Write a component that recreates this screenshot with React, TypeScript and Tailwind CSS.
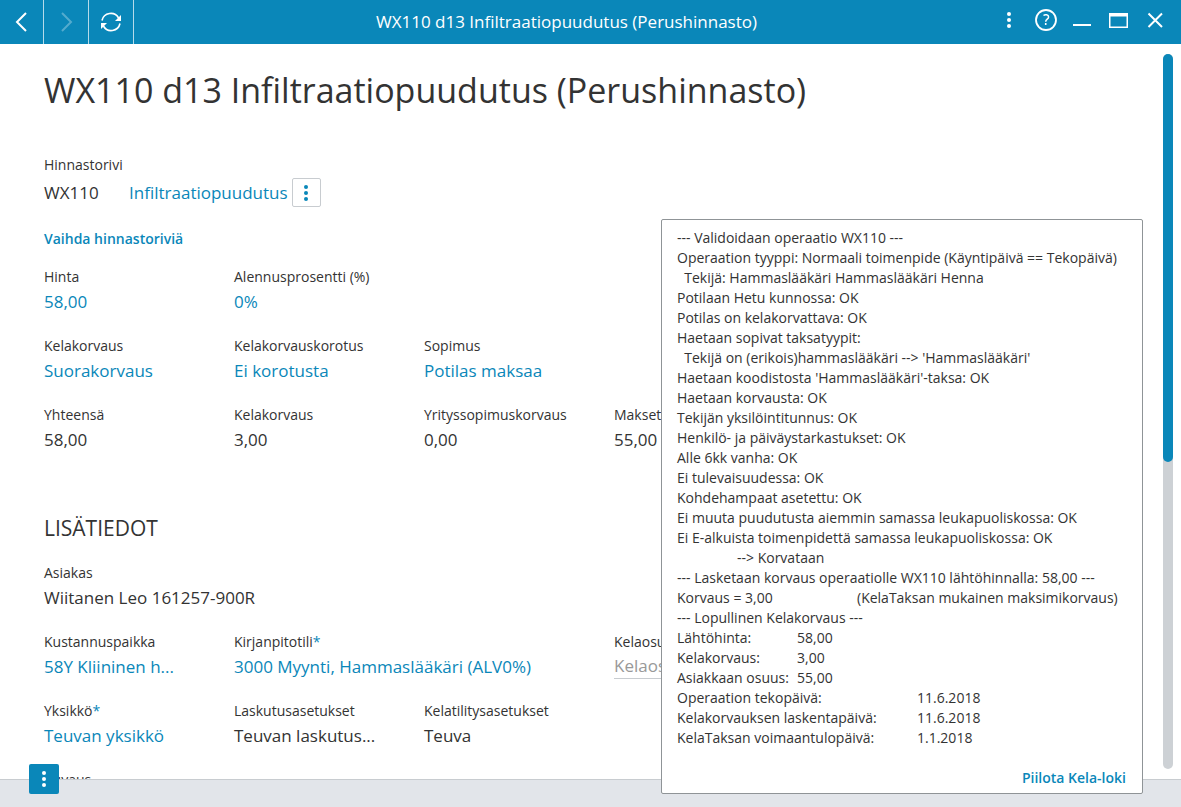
import { useState } from "react";
import type { ReactNode } from "react";

const LOG_TEXT = [
  "--- Validoidaan operaatio WX110 ---",
  "Operaation tyyppi: Normaali toimenpide (Käyntipäivä == Tekopäivä)",
  "  Tekijä: Hammaslääkäri Hammaslääkäri Henna",
  "Potilaan Hetu kunnossa: OK",
  "Potilas on kelakorvattava: OK",
  "Haetaan sopivat taksatyypit:",
  "  Tekijä on (erikois)hammaslääkäri --> 'Hammaslääkäri'",
  "Haetaan koodistosta 'Hammaslääkäri'-taksa: OK",
  "Haetaan korvausta: OK",
  "Tekijän yksilöintitunnus: OK",
  "Henkilö- ja päiväystarkastukset: OK",
  "Alle 6kk vanha: OK",
  "Ei tulevaisuudessa: OK",
  "Kohdehampaat asetettu: OK",
  "Ei muuta puudutusta aiemmin samassa leukapuoliskossa: OK",
  "Ei E-alkuista toimenpidettä samassa leukapuoliskossa: OK",
  "\t--> Korvataan",
  "--- Lasketaan korvaus operaatiolle WX110 lähtöhinnalla: 58,00 ---",
  "Korvaus = 3,00\t\t(KelaTaksan mukainen maksimikorvaus)",
  "--- Lopullinen Kelakorvaus ---",
  "Lähtöhinta:\t58,00",
  "Kelakorvaus:\t3,00",
  "Asiakkaan osuus:\t55,00",
  "Operaation tekopäivä:\t\t11.6.2018",
  "Kelakorvauksen laskentapäivä:\t11.6.2018",
  "KelaTaksan voimaantulopäivä:\t1.1.2018",
].join("\n");

const TITLE = "WX110 d13 Infiltraatiopuudutus (Perushinnasto)";

const Dots = () => (
  <svg width="6" height="18" viewBox="0 0 6 18" fill="currentColor">
    <circle cx="3" cy="3" r="2" />
    <circle cx="3" cy="9" r="2" />
    <circle cx="3" cy="15" r="2" />
  </svg>
);

type FieldProps = {
  label: string;
  value: string;
  link?: boolean;
  required?: boolean;
  className?: string;
};

const Field = ({ label, value, link, required, className }: FieldProps) => (
  <div className={className}>
    <div className="text-sm leading-5 whitespace-nowrap">
      {label}
      {required && <span className="text-[#0a87b9]">*</span>}
    </div>
    <div className="text-[17px] leading-[29px] whitespace-nowrap">
      {link ? (
        <a href="#" className="text-[#0a87b9]">
          {value}
        </a>
      ) : (
        value
      )}
    </div>
  </div>
);

const Row = ({ children }: { children: ReactNode }) => (
  <div className="grid grid-cols-[repeat(4,190px)]">{children}</div>
);

export default function App() {
  const [showLog, setShowLog] = useState(true);
  const [share, setShare] = useState("");

  return (
    <div className="relative h-screen flex flex-col bg-[#e2e5ea] text-[#333] font-['Open_Sans','Noto_Sans',sans-serif]">
      <header className="h-11 shrink-0 flex bg-[#0a87b9] text-white">
        <button aria-label="Takaisin" className="w-11 flex items-center justify-center border-r border-white/70">
          <svg width="14" height="20" viewBox="0 0 14 20" fill="none" stroke="currentColor" strokeWidth="2">
            <path d="M11 1 2 10l9 9" />
          </svg>
        </button>
        <button aria-label="Eteenpäin" disabled className="w-[45px] flex items-center justify-center border-r border-white/70">
          <svg width="14" height="20" viewBox="0 0 14 20" fill="none" stroke="currentColor" strokeOpacity="0.3" strokeWidth="2">
            <path d="m3 1 9 9-9 9" />
          </svg>
        </button>
        <button aria-label="Päivitä" className="w-[45px] flex items-center justify-center border-r border-white/70">
          <svg width="22" height="20" viewBox="0 0 22 20" fill="none" stroke="currentColor" strokeWidth="1.6">
            <path d="M2 8.5A9 9 0 0 1 18.6 6" />
            <path d="M20 11.5A9 9 0 0 1 3.4 14" />
            <path d="M21 3v6h-6z" fill="currentColor" stroke="none" />
            <path d="M1 17v-6h6z" fill="currentColor" stroke="none" />
          </svg>
        </button>
        <div className="flex-1 flex items-center justify-center text-[17px]">{TITLE}</div>
        <div className="flex items-center gap-4 pr-4 pb-1">
          <button aria-label="Valikko" className="w-5 flex justify-center">
            <Dots />
          </button>
          <button aria-label="Ohje">
            <svg width="22" height="22" viewBox="0 0 22 22" fill="none" stroke="currentColor">
              <circle cx="11" cy="11" r="10" strokeWidth="1.8" />
              <path d="M8.5 6.500C10 5.300 13.600 5.400 13.600 8c0 2.200-2.900 2.200-2.900 4.700" strokeWidth="1.5" />
              <path d="M10.700 14v2" strokeWidth="1.6" />
            </svg>
          </button>
          <button aria-label="Pienennä">
            <svg width="20" height="20" viewBox="0 0 20 20" stroke="currentColor" strokeWidth="2">
              <path d="M0 15h18" />
            </svg>
          </button>
          <button aria-label="Suurenna">
            <svg width="20" height="16" viewBox="0 0 20 16" fill="currentColor">
              <path d="M0 1h19v15H0zm1.500 3.500v10h16v-10z" fillRule="evenodd" />
            </svg>
          </button>
          <button aria-label="Sulje">
            <svg width="20" height="20" viewBox="0 0 20 20" stroke="currentColor" strokeWidth="2">
              <path d="m3.500 3.500 13.500 13.500M17 3.500 3.500 17" />
            </svg>
          </button>
        </div>
      </header>

      <div className="flex-1 min-h-0 flex bg-white border-b border-[#c8ccd0]">
        <main className="flex-1 min-w-0 overflow-hidden pl-11 pt-5">
          <h1 className="text-[34px] leading-[52px] whitespace-nowrap">{TITLE}</h1>

          <div className="mt-[39px] text-sm leading-5">Hinnastorivi</div>
          <div className="mt-[3px] flex items-center text-[17px] leading-[29px]">
            <span className="w-[85px]">WX110</span>
            <a href="#" className="text-[#0a87b9]">
              Infiltraatiopuudutus
            </a>
            <button
              aria-label="Rivin toiminnot"
              className="ml-1 w-[29px] h-[29px] flex items-center justify-center border border-[#c8ccd0] rounded-xs text-[#0a87b9]"
            >
              <Dots />
            </button>
          </div>
          <button className="mt-[22px] block text-sm leading-5 font-semibold text-[#0a87b9]">
            Vaihda hinnastoriviä
          </button>

          <div className="mt-[18px] flex flex-col gap-5">
            <Row>
              <Field label="Hinta" value="58,00" link />
              <Field label="Alennusprosentti (%)" value="0%" link />
            </Row>
            <Row>
              <Field label="Kelakorvaus" value="Suorakorvaus" link />
              <Field label="Kelakorvauskorotus" value="Ei korotusta" link />
              <Field label="Sopimus" value="Potilas maksaa" link />
            </Row>
            <Row>
              <Field label="Yhteensä" value="58,00" />
              <Field label="Kelakorvaus" value="3,00" />
              <Field label="Yrityssopimuskorvaus" value="0,00" />
              <Field label="Maksettava" value="55,00" />
            </Row>
          </div>

          <h2 className="mt-[58px] text-[21px] leading-8">LISÄTIEDOT</h2>

          <div className="mt-[19px] flex flex-col gap-5">
            <Row>
              <Field label="Asiakas" value="Wiitanen Leo 161257-900R" />
            </Row>
            <Row>
              <Field label="Kustannuspaikka" value="58Y Kliininen h..." link />
              <Field label="Kirjanpitotili" value="3000 Myynti, Hammaslääkäri (ALV0%)" link required className="col-span-2" />
              <div>
                <label htmlFor="share" className="block text-sm leading-5">
                  Kelaosuus
                </label>
                <input
                  id="share"
                  value={share}
                  onChange={(e) => setShare(e.target.value)}
                  placeholder="Kelaosuus"
                  className="block w-[130px] h-[27px] text-[17px] border-b border-[#c8ccd0] outline-none placeholder:text-[#999]"
                />
              </div>
            </Row>
            <Row>
              <Field label="Yksikkö" value="Teuvan yksikkö" link required />
              <Field label="Laskutusasetukset" value="Teuvan laskutus..." />
              <Field label="Kelatilitysasetukset" value="Teuva" />
            </Row>
            <Row>
              <Field label="Kuvaus" value="" />
            </Row>
          </div>
        </main>

        <div className="w-2.5 my-2.5 mr-2 rounded-full bg-[#cdd1d5]">
          <div className="h-[57%] rounded-full bg-[#0a87b9]" />
        </div>
      </div>
      <footer className="h-[27px] shrink-0" />

      <button
        aria-label="Toiminnot"
        className="absolute left-[29px] bottom-[13px] w-[30px] h-[30px] flex items-center justify-center rounded-xs bg-[#0a87b9] text-white"
      >
        <Dots />
      </button>

      {showLog && (
        <section className="absolute right-[38px] bottom-[13px] w-[482px] flex flex-col bg-white border border-[#8f9497] rounded-xs pl-[15px] pr-4 pt-2 pb-[5px]">
          <pre className="text-sm leading-5 font-['Open_Sans','Noto_Sans',sans-serif] [tab-size:60px]">{LOG_TEXT}</pre>
          <button
            onClick={() => setShowLog(false)}
            className="mt-5 self-end text-sm leading-5 font-semibold text-[#0a87b9]"
          >
            Piilota Kela-loki
          </button>
        </section>
      )}
    </div>
  );
}
